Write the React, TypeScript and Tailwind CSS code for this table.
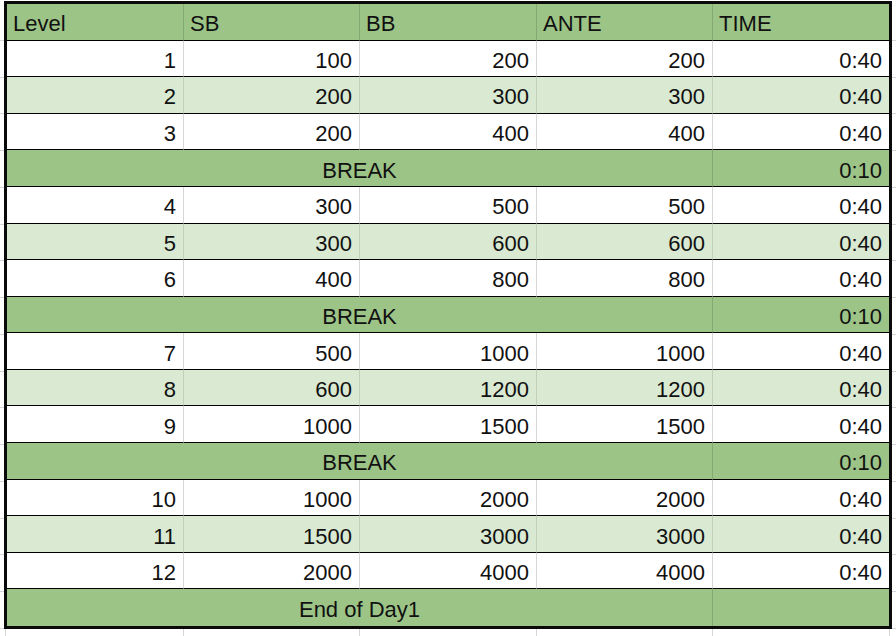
import React from 'react';

type Row =
  | { kind: 'level'; cells: string[]; shaded?: boolean }
  | { kind: 'break'; label: string; time: string };

const rows: Row[] = [
  { kind: 'level', cells: ['1', '100', '200', '200', '0:40'] },
  { kind: 'level', cells: ['2', '200', '300', '300', '0:40'], shaded: true },
  { kind: 'level', cells: ['3', '200', '400', '400', '0:40'] },
  { kind: 'break', label: 'BREAK', time: '0:10' },
  { kind: 'level', cells: ['4', '300', '500', '500', '0:40'] },
  { kind: 'level', cells: ['5', '300', '600', '600', '0:40'], shaded: true },
  { kind: 'level', cells: ['6', '400', '800', '800', '0:40'] },
  { kind: 'break', label: 'BREAK', time: '0:10' },
  { kind: 'level', cells: ['7', '500', '1000', '1000', '0:40'] },
  { kind: 'level', cells: ['8', '600', '1200', '1200', '0:40'], shaded: true },
  { kind: 'level', cells: ['9', '1000', '1500', '1500', '0:40'] },
  { kind: 'break', label: 'BREAK', time: '0:10' },
  { kind: 'level', cells: ['10', '1000', '2000', '2000', '0:40'] },
  { kind: 'level', cells: ['11', '1500', '3000', '3000', '0:40'], shaded: true },
  { kind: 'level', cells: ['12', '2000', '4000', '4000', '0:40'] },
  { kind: 'break', label: 'End of Day1', time: '' },
];

const headers = ['Level', 'SB', 'BB', 'ANTE', 'TIME'];

const cellBase = 'flex items-center pt-[5px] border-b border-black text-[22px] leading-none text-[#111]';

const App: React.FC = () => {
  return (
    <div
      className="w-[896px] h-[636px] bg-white overflow-hidden"
      style={{ fontFamily: '"Liberation Sans", Arial, sans-serif' }}
    >
      <div className="flex pt-px">
        {/* sheet gridlines left of the framed table */}
        <div className="w-[4px] grid grid-rows-[repeat(17,minmax(0,1fr))] pt-[3px]">
          {Array.from({ length: 17 }).map((_, i) => (
            <div key={i} className="border-b border-[#d6d6d6]" />
          ))}
        </div>

        <div className="w-[888px] h-[628px] border-[3px] border-[#0a0a0a]">
          <div className="grid grid-cols-[177px_176px_177px_176px_176px] grid-rows-[repeat(17,minmax(0,1fr))] h-full">
            {headers.map((h, i) => (
              <div
                key={h}
                className={`${cellBase} bg-[#9dc487] px-[6px] ${i < 4 ? 'border-r border-r-[#86a873]' : ''}`}
              >
                {h}
              </div>
            ))}

            {rows.map((row, ri) => {
              const last = ri === rows.length - 1;
              if (row.kind === 'break') {
                return (
                  <React.Fragment key={ri}>
                    <div
                      className={`${cellBase} col-span-4 justify-center bg-[#9dc487] border-r border-r-[#86a873] ${last ? 'border-b-0' : ''}`}
                    >
                      {row.label}
                    </div>
                    <div className={`${cellBase} justify-end pr-[7px] bg-[#9dc487] ${last ? 'border-b-0' : ''}`}>
                      {row.time}
                    </div>
                  </React.Fragment>
                );
              }
              return row.cells.map((c, ci) => (
                <div
                  key={`${ri}-${ci}`}
                  className={`${cellBase} justify-end pr-[7px] ${row.shaded ? 'bg-[#d9e9d2]' : 'bg-white'} ${
                    ci < 4 ? (row.shaded ? 'border-r border-r-[#c2cfbc]' : 'border-r border-r-[#d6d6d6]') : ''
                  }`}
                >
                  {c}
                </div>
              ));
            })}
          </div>
        </div>

        <div className="w-[4px] grid grid-rows-[repeat(17,minmax(0,1fr))] pt-[3px]">
          {Array.from({ length: 17 }).map((_, i) => (
            <div key={i} className="border-b border-[#d6d6d6]" />
          ))}
        </div>
      </div>

      {/* gridlines of the sheet row below the table */}
      <div className="flex h-[7px]">
        <div className="w-[6px] border-r border-[#d6d6d6]" />
        <div className="w-[178px] border-r border-[#d6d6d6]" />
        <div className="w-[176px] border-r border-[#d6d6d6]" />
        <div className="w-[177px] border-r border-[#d6d6d6]" />
        <div className="w-[176px] border-r border-[#d6d6d6]" />
        <div className="w-[177px] border-r border-[#d6d6d6]" />
      </div>
    </div>
  );
};

export default App;
